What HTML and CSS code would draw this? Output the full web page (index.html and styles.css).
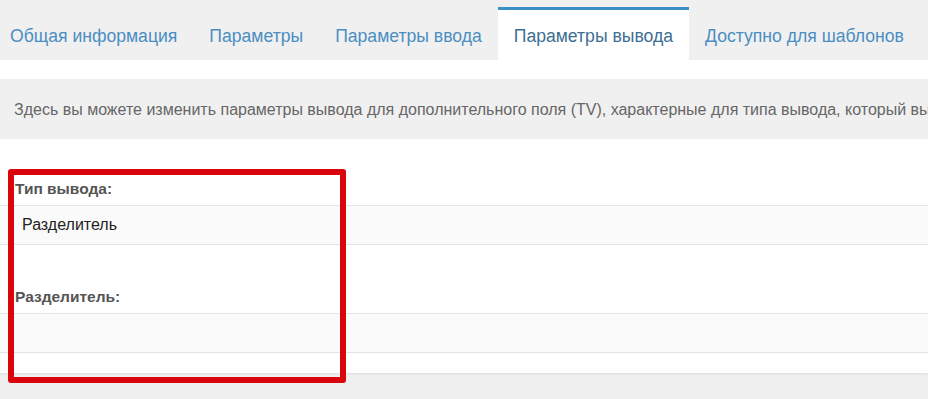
FILE: index.html
```html
<!DOCTYPE html>
<html lang="ru">
<head>
    <meta charset="UTF-8">
    <meta name="viewport" content="width=device-width, initial-scale=1.0">
    <title>Параметры вывода</title>
    <link rel="stylesheet" href="styles.css">
</head>
<body>
    <div class="tabs">
        <a class="tab">Общая информация</a>
        <a class="tab">Параметры</a>
        <a class="tab">Параметры ввода</a>
        <a class="tab active">Параметры вывода</a>
        <a class="tab">Доступно для шаблонов</a>
    </div>
    <div class="panel">
        <div class="intro">
            Здесь вы можете изменить параметры вывода для дополнительного поля (TV), характерные для типа вывода, который вы выбрали ниже.
        </div>
        <div class="form">
            <div class="field">
                <div class="label">Тип вывода:</div>
                <div class="value">Разделитель</div>
            </div>
            <div class="field">
                <div class="label">Разделитель:</div>
                <div class="value"></div>
            </div>
        </div>
        <div class="mark"></div>
    </div>
    <div class="footer"></div>
</body>
</html>
```

FILE: styles.css
```css
* {
    padding: 0;
    margin: 0;
    box-sizing: border-box;
}
body {
    width: 928px;
    height: 399px;
    overflow: hidden;
    background-color: #f0f0f0;
    font-family: "Liberation Sans", Arial, sans-serif;
}
.tabs {
    display: flex;
    height: 60px;
    padding-top: 7px;
    background-color: #f0f0f0;
}
.tab {
    display: block;
    padding: 0 16px;
    line-height: 52px;
    font-size: 17.6px;
    color: #4b8ec2;
    border-top: 3px solid transparent;
}
.tab:first-child {
    padding-left: 10px;
}
.active {
    padding: 0 16px;
    background-color: #fff;
    border-top-color: #3a8fc4;
    color: #3d6f94;
}
.panel {
    position: relative;
    height: 313px;
    padding-top: 19px;
    background-color: #fff;
    box-shadow: 0 1px 2px rgba(0, 0, 0, .08);
}
.intro {
    height: 60px;
    padding-left: 14px;
    line-height: 61px;
    white-space: nowrap;
    overflow: hidden;
    font-size: 16px;
    color: #666;
    background-color: #f0f0f0;
}
.form {
    padding-top: 38px;
}
.field {
    margin-bottom: 40px;
}
.field:last-child {
    margin-bottom: 0;
}
.label {
    height: 28px;
    padding: 2px 0 0 15px;
    line-height: 20px;
    font-size: 15.5px;
    font-weight: bold;
    color: #555;
}
.value {
    height: 40px;
    padding-left: 22px;
    line-height: 38px;
    font-size: 16px;
    color: #222;
    background-color: #fafafa;
    border-top: 1px solid #e4e4e4;
    border-bottom: 1px solid #e4e4e4;
}
.mark {
    position: absolute;
    left: 8px;
    top: 109px;
    width: 338px;
    height: 214px;
    border: 6px solid #d9050a;
    border-radius: 3px;
}
```
